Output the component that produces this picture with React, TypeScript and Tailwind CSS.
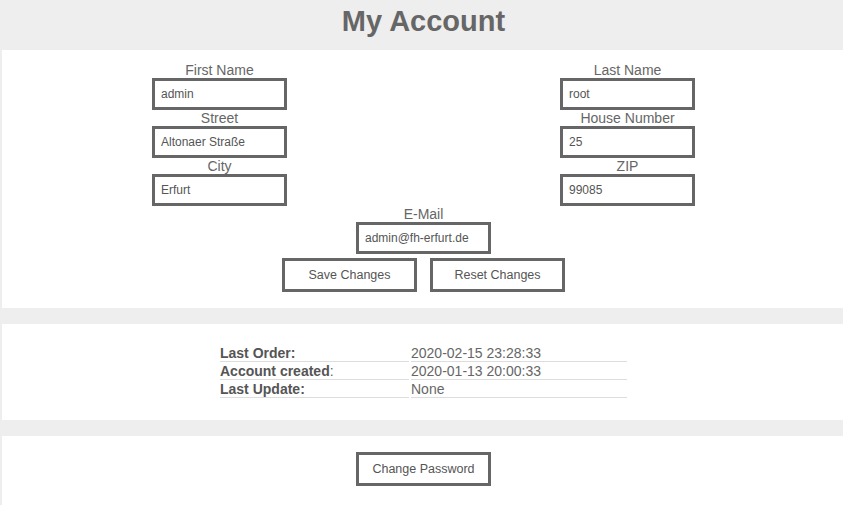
import React from 'react';

const left = [
  { label: 'First Name', value: 'admin' },
  { label: 'Street', value: 'Altonaer Straße' },
  { label: 'City', value: 'Erfurt' },
];

const right = [
  { label: 'Last Name', value: 'root' },
  { label: 'House Number', value: '25' },
  { label: 'ZIP', value: '99085' },
];

const info = [
  { label: 'Last Order', value: '2020-02-15 23:28:33', boldColon: true },
  { label: 'Account created', value: '2020-01-13 20:00:33', boldColon: false },
  { label: 'Last Update', value: 'None', boldColon: true },
];

function Field({ label, value }: { label: string; value: string }) {
  return (
    <div className="flex flex-col items-center w-[135px]">
      <span className="text-[14px] leading-[16px] text-[#666]">{label}</span>
      <input
        readOnly
        value={value}
        className="w-[135px] h-[32px] border-[3px] border-[#666] bg-white px-[6px] text-[12px] text-[#555] outline-none"
      />
    </div>
  );
}

function Button({ children }: { children: React.ReactNode }) {
  return (
    <button className="w-[135px] h-[34px] border-[3px] border-[#666] bg-white text-[12.5px] text-[#555]">
      {children}
    </button>
  );
}

export default function App() {
  return (
    <div className="w-[843px] h-[505px] overflow-hidden bg-[#eeeeee] font-['Liberation_Sans',Arial,sans-serif]">
      {/* Header */}
      <div className="h-[50px] flex justify-center pl-[4px] pt-[6px]">
        <h1 className="text-[29px] font-bold text-[#666] leading-[30px]">My Account</h1>
      </div>

      {/* Account form */}
      <div className="ml-[2px] w-[843px] bg-white pt-[12px] pb-[16px] flex flex-col items-center">
        <div className="w-[543px] flex justify-between">
          <div className="flex flex-col">
            {left.map((f) => (
              <Field key={f.label} {...f} />
            ))}
          </div>
          <div className="flex flex-col">
            {right.map((f) => (
              <Field key={f.label} {...f} />
            ))}
          </div>
        </div>
        <Field label="E-Mail" value="admin@fh-erfurt.de" />
        <div className="mt-[4px] flex gap-[13px]">
          <Button>Save Changes</Button>
          <Button>Reset Changes</Button>
        </div>
      </div>

      {/* Info table */}
      <div className="mt-[16px] ml-[2px] w-[843px] h-[96px] bg-white pt-[20px] flex justify-center">
        <table className="w-[411px] h-[56px] border-separate border-spacing-[2px] text-[14px] text-[#666]">
          <tbody>
            {info.map((r) => (
              <tr key={r.label}>
                <td className="w-[189px] h-[16px] p-0 leading-[15px] border-b border-[#ddd]">
                  <span className="font-bold text-[#555]">{r.label}</span>
                  {r.boldColon ? <span className="font-bold text-[#555]">:</span> : <span>:</span>}
                </td>
                <td className="h-[16px] p-0 leading-[15px] border-b border-[#ddd]">{r.value}</td>
              </tr>
            ))}
          </tbody>
        </table>
      </div>

      {/* Password */}
      <div className="mt-[16px] ml-[2px] w-[843px] h-[100px] bg-white pt-[16px] flex justify-center">
        <Button>Change Password</Button>
      </div>
    </div>
  );
}
